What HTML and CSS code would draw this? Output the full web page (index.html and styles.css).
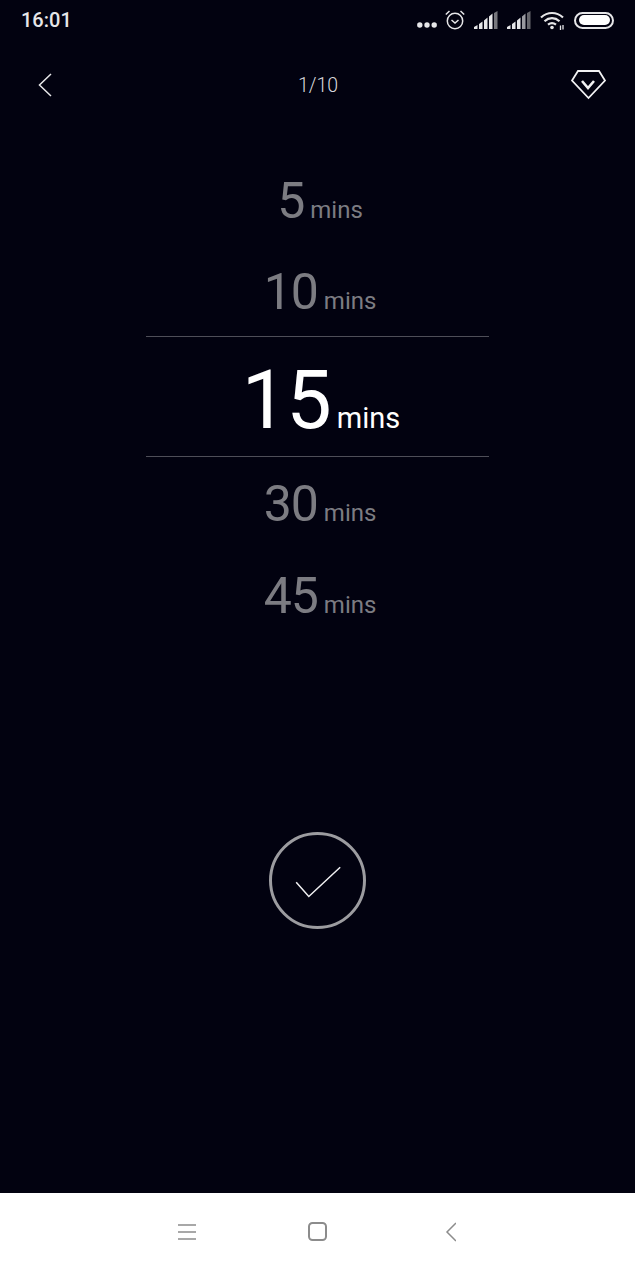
FILE: index.html
```html
<!DOCTYPE html>
<html lang="en">
<head>
    <meta charset="UTF-8">
    <meta name="viewport" content="width=device-width, initial-scale=1.0">
    <title>Pick a Duration</title>
    <link rel="stylesheet" href="styles.css">
</head>
<body>
    <div id="screen">
        <div class="status-bar">
            <span class="clock">16:01</span>
            <div class="status-icons">
                <svg class="dots" width="20" height="6" viewBox="0 0 20 6"><circle cx="2.800" cy="3" r="2.700"/><circle cx="10" cy="3" r="2.700"/><circle cx="17.200" cy="3" r="2.700"/></svg>
                <svg class="alarm" width="20" height="20" viewBox="0 0 20 20" fill="none" stroke="#e6e6e8" stroke-width="1.500"><circle cx="10" cy="11" r="7.700"/><path d="M6.500 10l3.500 3 3.500-3M0.800 4.500l3.700-3.500M19.200 4.500l-3.700-3.500"/></svg>
                <svg class="signal" width="24" height="18" viewBox="0 0 24 18"><path d="M0 16l3.500-2v4H0z"/><path d="M5 13l3.500-2.500V18H5z"/><path d="M10 9.500l3.500-3V18H10z"/><path d="M15 5.500l3.500-3V18H15z"/><path d="M20 2l3.500-2v18H20z" fill="#77777d"/></svg>
                <svg class="signal" width="24" height="18" viewBox="0 0 24 18"><path d="M0 16l3.500-2v4H0z"/><path d="M5 13l3.500-2.500V18H5z"/><path d="M10 9.500l3.500-3V18H10z"/><path d="M15 5.500l3.500-3V18H15z" fill="#9a9aa0"/><path d="M20 2l3.500-2v18H20z" fill="#66666c"/></svg>
                <svg class="wifi" width="25" height="19" viewBox="0 0 25 19" fill="none" stroke="#e6e6e8" stroke-width="2.200"><path d="M1 6.500c6.500-6 15.500-6 22 0M4.500 10.200c4.500-4 10.500-4 15 0M8 13.700c2.500-2 5.500-2 8 0"/><circle cx="12" cy="16.500" r="1.800" fill="#e6e6e8" stroke="none"/><path d="M20.500 14.500v4.500M23 14v4.500" stroke-width="1.300"/></svg>
                <div class="battery"><div class="battery-fill"></div></div>
            </div>
        </div>

        <div class="top-bar">
            <svg class="back" width="14" height="24" viewBox="0 0 14 24" fill="none" stroke="#e8e8ea" stroke-width="1.500"><path d="M13 1L1.500 12 13 23"/></svg>
            <span class="progress">1/10</span>
            <svg class="vip" width="35" height="30" viewBox="0 0 35 30" fill="none" stroke="#f2f2f4" stroke-width="1.800"><path d="M7 1h21l6 9.500L17.500 28 1 10.500z"/><path d="M11 11l6 7 6-7" stroke-width="2.600"/></svg>
        </div>

        <div class="picker">
            <div class="row"><span class="num">5</span><span class="unit">mins</span></div>
            <div class="row"><span class="num">10</span><span class="unit">mins</span></div>
            <div class="row selected"><span class="num">15</span><span class="unit">mins</span></div>
            <div class="row"><span class="num">30</span><span class="unit">mins</span></div>
            <div class="row"><span class="num">45</span><span class="unit">mins</span></div>
        </div>

        <div class="confirm">
            <div class="confirm-btn">
                <svg width="48" height="34" viewBox="0 0 48 34" fill="none" stroke="#f0f0f2" stroke-width="1.500"><path d="M2.200 18.200l12.600 14.300L46.200 3.200"/></svg>
            </div>
        </div>
    </div>

    <div class="nav-bar">
        <svg width="18" height="18" viewBox="0 0 18 18" fill="none" stroke="#8c8c8c" stroke-width="1.500"><path d="M0 2h18M0 9h18M0 16h18"/></svg>
        <svg width="19" height="19" viewBox="0 0 19 19" fill="none" stroke="#8c8c8c" stroke-width="2"><rect x="1" y="1" width="17" height="17" rx="3.500"/></svg>
        <svg width="17" height="20" viewBox="0 0 17 20" fill="none" stroke="#8c8c8c" stroke-width="1.500"><path d="M17 1L8 10l9 9"/></svg>
    </div>
</body>
</html>
```

FILE: styles.css
```css
* {
    box-sizing: border-box;
}

body {
    font-family: Roboto, "Liberation Sans", sans-serif;
    margin: 0;
    padding: 0;
    width: 635px;
    height: 1270px;
    overflow: hidden;
    display: flex;
    flex-direction: column;
    background-color: #fff;
}

#screen {
    height: 1193px;
    background-color: #020210;
    color: #fff;
}

.status-bar {
    height: 40px;
    padding: 0 21px;
    display: flex;
    justify-content: space-between;
    align-items: center;
}

.clock {
    font-size: 20px;
    font-weight: 500;
    color: #e6e6e8;
}

.status-icons {
    display: flex;
    align-items: center;
    gap: 9px;
}

.status-icons svg {
    fill: #e6e6e8;
}

.status-icons .alarm,
.status-icons .wifi {
    fill: none;
}

.status-icons .dots {
    margin: 10px -1px 0 1px;
}

.battery {
    width: 40px;
    height: 17px;
    padding: 1.500px 2.500px;
    border: 2px solid #e6e6e8;
    border-radius: 9px;
}

.battery-fill {
    height: 100%;
    background-color: #fff;
    border-radius: 6px;
}

.top-bar {
    height: 90px;
    padding: 0 29px 0 30px;
    display: grid;
    grid-template-columns: 1fr auto 1fr;
    align-items: center;
}

.top-bar .back {
    margin-left: 8px;
}

.top-bar .vip {
    justify-self: end;
}

.progress {
    font-size: 19.500px;
    font-weight: 300;
    color: #d8d8dc;
}

.picker {
    width: 343px;
    margin: 24px auto 0;
}

.row {
    height: 92px;
    padding: 22px 0 0 5px;
    display: flex;
    justify-content: center;
    align-items: baseline;
    gap: 6px;
    color: #7c7c82;
}

.row:nth-child(-n+2) {
    height: 91px;
}

.row .num {
    font-size: 50px;
    line-height: 50px;
    letter-spacing: -1px;
}

.row .unit {
    font-size: 24px;
}

.row.selected {
    height: 121px;
    padding: 23px 0 0 7px;
    border-top: 1px solid #4e4e58;
    border-bottom: 1px solid #4e4e58;
    color: #fff;
}

.row.selected .num {
    font-size: 81px;
    line-height: 81px;
    letter-spacing: -1px;
}

.row.selected .unit {
    font-size: 29px;
}

.confirm {
    margin-top: 191px;
    display: flex;
    justify-content: center;
}

.confirm-btn {
    width: 97px;
    height: 97px;
    border: 3px solid #9c9ca0;
    border-radius: 50%;
    display: flex;
    justify-content: center;
    align-items: center;
}

.nav-bar {
    height: 77px;
    padding-left: 178px;
    display: flex;
    gap: 112px;
    align-items: center;
    background-color: #fff;
}
```
